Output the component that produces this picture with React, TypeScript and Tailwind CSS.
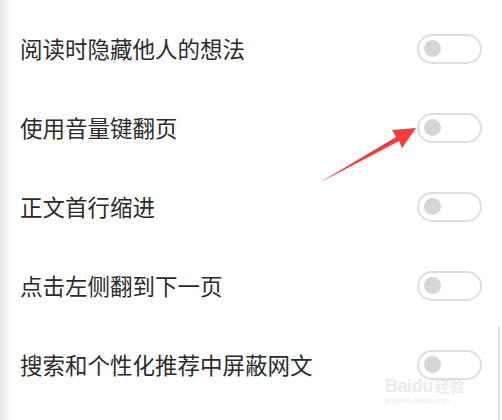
const items = [
  '阅读时隐藏他人的想法',
  '使用音量键翻页',
  '正文首行缩进',
  '点击左侧翻到下一页',
  '搜索和个性化推荐中屏蔽网文',
];

function Toggle() {
  return (
    <div className="flex h-[30px] w-[65px] items-center rounded-full border-2 border-[#dedede] bg-white pl-[5px]">
      <div className="h-[17px] w-[17px] rounded-full bg-[#d6d6d6]" />
    </div>
  );
}

export default function App() {
  return (
    <div
      className="relative h-[420px] w-[502px] overflow-hidden bg-white pt-[9px]"
      style={{ fontFamily: '"Noto Sans CJK SC", "Noto Sans", sans-serif' }}
    >
      {/* left edge shade */}
      <div className="absolute inset-y-0 left-0 w-[12px] bg-gradient-to-r from-[#e6e8e8] to-white" />
      {/* right edge line */}
      <div className="absolute right-[2px] top-[326px] h-[100px] w-[2px] rounded-t-full bg-[#e2e2e2]" />

      {items.map((label) => (
        <div key={label} className="relative flex h-[79px] items-center justify-between pl-[20px] pr-[20px]">
          <span className="text-[22.5px] leading-none text-[#2b2b2b]">{label}</span>
          <Toggle />
        </div>
      ))}

      {/* red arrow */}
      <svg className="absolute left-0 top-0" width="502" height="420" viewBox="0 0 502 420">
        <path d="M319 183 L396 137 L392 130 L416 128 L402 148 L399 141 Z" fill="#f23b3b" />
      </svg>

      {/* watermark */}
      <div className="absolute left-[385px] top-[377px] leading-none text-[#ebebeb]">
        <div className="text-[18px] font-bold tracking-tight" style={{ fontFamily: '"Liberation Sans", sans-serif' }}>
          Baidu<span className="ml-[2px] text-[15px]" style={{ fontFamily: '"Noto Sans CJK SC", sans-serif' }}>经验</span>
        </div>
        <div className="mt-[2px] text-[8px]" style={{ fontFamily: '"Liberation Sans", sans-serif' }}>jingyan.baidu.com</div>
      </div>
    </div>
  );
}
